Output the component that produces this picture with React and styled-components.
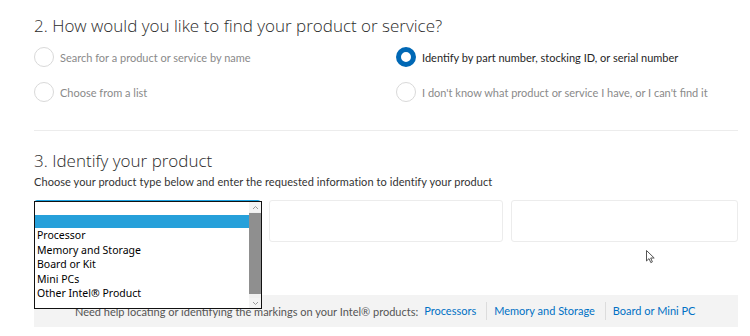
import React from "react";
import styled, { createGlobalStyle } from "styled-components";

const GlobalStyle = createGlobalStyle`
  html, body {
    margin: 0;
    padding: 0;
    background: #ffffff;
  }
  body {
    font-family: Lato, "Open Sans", sans-serif;
    color: #333333;
  }
`;

const Page = styled.div`
  position: relative;
  width: 750px;
  height: 336px;
  overflow: hidden;
  padding: 15px 12px 0 34px;
  box-sizing: border-box;
`;

const Heading = styled.h2`
  margin: 0;
  font-family: "Open Sans", sans-serif;
  font-weight: 300;
  font-size: 17px;
  line-height: 22px;
  color: #2b2b2b;
`;

const RadioGrid = styled.div`
  display: grid;
  grid-template-columns: 362px 1fr;
  row-gap: 15px;
  margin-top: 10px;
`;

const RadioRow = styled.label`
  display: flex;
  align-items: center;
  gap: 6px;
  height: 20px;
  font-size: 11px;
  color: ${(p) => (p.$checked ? "#262626" : "#8a8a8a")};
`;

const Circle = styled.span`
  width: 20px;
  height: 20px;
  box-sizing: border-box;
  border-radius: 50%;
  border: ${(p) => (p.$checked ? "5px solid #0068b5" : "1px solid #d9d9d9")};
  background: #ffffff;
  flex: none;
`;

const Divider = styled.hr`
  margin: 28px 0 0;
  border: 0;
  border-top: 1px solid #ececec;
`;

const SubHeading = styled(Heading)`
  margin-top: 19px;
`;

const Lead = styled.p`
  margin: 1px 0 0;
  font-size: 11px;
  line-height: 18px;
  letter-spacing: 0.07px;
  color: #333333;
`;

const Fields = styled.div`
  display: grid;
  grid-template-columns: 227px 234px 227px;
  gap: 8px;
  margin-top: 9px;
`;

const Field = styled.div`
  position: relative;
  height: 42px;
  box-sizing: border-box;
  border: 1px solid ${(p) => (p.$focus ? "#1aa1e0" : "#ececec")};
  border-radius: 3px;
  background: #ffffff;
`;

const ListBox = styled.div`
  position: absolute;
  top: 0;
  left: -1px;
  width: 228px;
  height: 108px;
  box-sizing: border-box;
  border: 1px solid #111111;
  background: #ffffff;
  display: flex;
  z-index: 2;
`;

const Options = styled.div`
  flex: 1;
  font-family: "Noto Sans", sans-serif;
  font-size: 10.5px;
  color: #000000;
`;

const Option = styled.div`
  height: ${(p) => (p.$blank ? "13px" : "14.6px")};
  line-height: 14.6px;
  padding-left: 2px;
  background: ${(p) => (p.$selected ? "#26a0da" : "transparent")};
  white-space: nowrap;
`;

const ScrollBar = styled.div`
  width: 12px;
  display: flex;
  flex-direction: column;
  background: #f0f0f0;
`;

const Arrow = styled.div`
  height: 10px;
  display: flex;
  align-items: center;
  justify-content: center;
  background: #f4f4f4;
`;

const Thumb = styled.div`
  flex: 1;
  margin: 1px 0 4px;
  background: #8f8f8f;
`;

const Banner = styled.div`
  display: flex;
  align-items: center;
  height: 32px;
  margin-top: 53px;
  padding-left: 41px;
  background: #f3f3f3;
  font-size: 11px;
  color: #555555;
  white-space: nowrap;
`;

const Links = styled.div`
  display: flex;
  align-items: center;
  margin-left: 6px;
`;

const Link = styled.a`
  color: #0071c5;
  text-decoration: none;
  padding: 0 10px 0 7px;
  border-left: ${(p) => (p.$first ? "none" : "1px solid #dcdcdc")};
  line-height: 18px;
  &:first-child {
    padding-left: 0;
  }
`;

const Cursor = styled.svg`
  position: absolute;
  left: 646px;
  top: 250px;
`;

const Chevron = ({ down }) => (
  <svg width="7" height="5" viewBox="0 0 7 5">
    <path
      d={down ? "M1 1 L3.5 3.5 L6 1" : "M1 4 L3.5 1.5 L6 4"}
      fill="none"
      stroke="#9a9a9a"
      strokeWidth="1"
    />
  </svg>
);

const options = [
  "Processor",
  "Memory and Storage",
  "Board or Kit",
  "Mini PCs",
  "Other Intel® Product",
];

export default function App() {
  return (
    <Page>
      <GlobalStyle />
      <Heading>2. How would you like to find your product or service?</Heading>
      <RadioGrid>
        <RadioRow>
          <Circle />
          Search for a product or service by name
        </RadioRow>
        <RadioRow $checked>
          <Circle $checked />
          Identify by part number, stocking ID, or serial number
        </RadioRow>
        <RadioRow>
          <Circle />
          Choose from a list
        </RadioRow>
        <RadioRow>
          <Circle />
          I don't know what product or service I have, or I can't find it
        </RadioRow>
      </RadioGrid>
      <Divider />
      <SubHeading>3. Identify your product</SubHeading>
      <Lead>
        Choose your product type below and enter the requested information to
        identify your product
      </Lead>
      <Fields>
        <Field $focus>
          <ListBox>
            <Options>
              <Option $blank />
              <Option $blank $selected />
              {options.map((o) => (
                <Option key={o}>{o}</Option>
              ))}
            </Options>
            <ScrollBar>
              <Arrow>
                <Chevron />
              </Arrow>
              <Thumb />
              <Arrow>
                <Chevron down />
              </Arrow>
            </ScrollBar>
          </ListBox>
        </Field>
        <Field />
        <Field />
      </Fields>
      <Banner>
        Need help locating or identifying the markings on your Intel® products:
        <Links>
          <Link $first>Processors</Link>
          <Link>Memory and Storage</Link>
          <Link>Board or Mini PC</Link>
        </Links>
      </Banner>
      <Cursor width="10" height="14" viewBox="0 0 10 14">
        <path
          d="M0.5 0.5 L0.5 11 L3 8.6 L4.8 12.6 L6.4 11.9 L4.7 8 L8.2 8 Z"
          fill="#ffffff"
          stroke="#555555"
          strokeWidth="1"
          strokeLinejoin="round"
        />
      </Cursor>
    </Page>
  );
}
